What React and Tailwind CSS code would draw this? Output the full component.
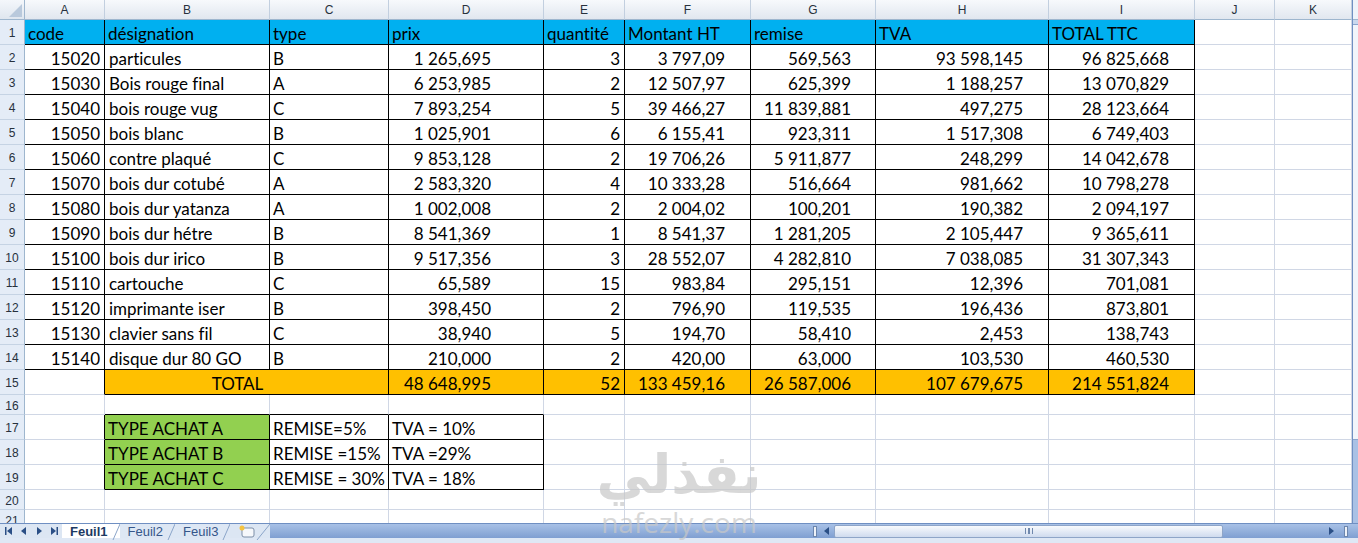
import React from 'react';

const COLS = [
  { key: 'A', w: 'w-[80px]', num: 'justify-end pr-[4px]' },
  { key: 'B', w: 'w-[165px]', num: 'justify-start pl-[4px]' },
  { key: 'C', w: 'w-[119px]', num: 'justify-start pl-[3px]' },
  { key: 'D', w: 'w-[155px]', num: 'justify-end pr-[52px]' },
  { key: 'E', w: 'w-[81px]', num: 'justify-end pr-[4px]' },
  { key: 'F', w: 'w-[126px]', num: 'justify-end pr-[25px]' },
  { key: 'G', w: 'w-[125px]', num: 'justify-end pr-[24px]' },
  { key: 'H', w: 'w-[173px]', num: 'justify-end pr-[25px]' },
  { key: 'I', w: 'w-[146px]', num: 'justify-end pr-[25px]' },
  { key: 'J', w: 'w-[80px]', num: '' },
  { key: 'K', w: 'w-[77px]', num: '' },
];

const HEAD = ['code', 'désignation', 'type', 'prix', 'quantité', 'Montant HT', 'remise', 'TVA', 'TOTAL TTC'];

const DATA = [
  ['15020', 'particules', 'B', '1 265,695', '3', '3 797,09', '569,563', '93 598,145', '96 825,668'],
  ['15030', 'Bois rouge final', 'A', '6 253,985', '2', '12 507,97', '625,399', '1 188,257', '13 070,829'],
  ['15040', 'bois rouge vug', 'C', '7 893,254', '5', '39 466,27', '11 839,881', '497,275', '28 123,664'],
  ['15050', 'bois blanc', 'B', '1 025,901', '6', '6 155,41', '923,311', '1 517,308', '6 749,403'],
  ['15060', 'contre plaqué', 'C', '9 853,128', '2', '19 706,26', '5 911,877', '248,299', '14 042,678'],
  ['15070', 'bois dur cotubé', 'A', '2 583,320', '4', '10 333,28', '516,664', '981,662', '10 798,278'],
  ['15080', 'bois dur yatanza', 'A', '1 002,008', '2', '2 004,02', '100,201', '190,382', '2 094,197'],
  ['15090', 'bois dur hétre', 'B', '8 541,369', '1', '8 541,37', '1 281,205', '2 105,447', '9 365,611'],
  ['15100', 'bois dur irico', 'B', '9 517,356', '3', '28 552,07', '4 282,810', '7 038,085', '31 307,343'],
  ['15110', 'cartouche', 'C', '65,589', '15', '983,84', '295,151', '12,396', '701,081'],
  ['15120', 'imprimante iser', 'B', '398,450', '2', '796,90', '119,535', '196,436', '873,801'],
  ['15130', 'clavier sans fil', 'C', '38,940', '5', '194,70', '58,410', '2,453', '138,743'],
  ['15140', 'disque dur 80 GO', 'B', '210,000', '2', '420,00', '63,000', '103,530', '460,530'],
];

const TOTAL = ['48 648,995', '52', '133 459,16', '26 587,006', '107 679,675', '214 551,824'];

const ACHAT = [
  ['TYPE ACHAT A', 'REMISE=5%', 'TVA = 10%'],
  ['TYPE ACHAT B', 'REMISE =15%', 'TVA =29%'],
  ['TYPE ACHAT C', 'REMISE = 30%', 'TVA = 18%'],
];

// cells that carry the black table borders (row 1..21, col 0..10 = A..K)
function inTable(r, c) {
  if (r >= 1 && r <= 14) return c <= 8;
  if (r === 15) return c >= 1 && c <= 8;
  if (r >= 17 && r <= 19) return c >= 1 && c <= 3;
  return false;
}

function rowHeight(r) {
  if (r === 16 || r === 20 || r === 21) return 'h-[20px]';
  return 'h-[25px]';
}

function cellContent(r, c) {
  if (r === 1 && c <= 8) return { text: HEAD[c], bg: 'bg-[#00b0f0]', align: 'justify-start pl-[3px]' };
  if (r >= 2 && r <= 14 && c <= 8) return { text: DATA[r - 2][c], align: COLS[c].num };
  if (r === 15 && c >= 3 && c <= 8) return { text: TOTAL[c - 3], bg: 'bg-[#ffc000]', align: COLS[c].num };
  if (r >= 17 && r <= 19 && c >= 1 && c <= 3) {
    return {
      text: ACHAT[r - 17][c - 1],
      bg: c === 1 ? 'bg-[#92d050]' : '',
      align: 'justify-start pl-[3px]',
    };
  }
  return { text: '' };
}

function Cell({ r, c, w, content }) {
  const rightBlack = inTable(r, c) || inTable(r, c + 1);
  const bottomBlack = inTable(r, c) || inTable(r + 1, c);
  return (
    <div
      className={`${w} h-full shrink-0 flex items-center pt-[3px] border-r border-b whitespace-nowrap overflow-hidden ${
        rightBlack ? 'border-r-black' : 'border-r-[#d0d7e5]'
      } ${bottomBlack ? 'border-b-black' : 'border-b-[#d0d7e5]'} ${content.bg || 'bg-white'} ${content.align || ''}`}
    >
      {content.text}
    </div>
  );
}

function SheetRow({ r }) {
  const cells = [];
  for (let c = 0; c < COLS.length; c++) {
    if (r === 15 && c === 1) {
      // B15:C15 merged
      cells.push(
        <div
          key={c}
          className="w-[284px] h-full shrink-0 flex items-center justify-center pt-[3px] pr-[18px] border-r border-b border-black bg-[#ffc000]"
        >
          TOTAL
        </div>
      );
      c++;
      continue;
    }
    cells.push(<Cell key={c} r={r} c={c} w={COLS[c].w} content={cellContent(r, c)} />);
  }
  return (
    <div className={`flex ${rowHeight(r)}`}>
      <div className="w-[25px] h-full shrink-0 flex items-center justify-center pt-[2px] bg-[#e4ecf7] border-r border-b border-r-[#9eb6ce] border-b-[#c5d3e4] text-[12px] text-[#27313d] font-['Liberation_Sans',sans-serif]">
        {r}
      </div>
      {cells}
    </div>
  );
}

function HeaderRow() {
  return (
    <div className="flex h-[20px]">
      <div className="w-[25px] h-full shrink-0 relative bg-[linear-gradient(#f4f7fb,#dfe6ef)] border-r border-b border-[#9eb6ce]">
        <svg className="absolute right-[2px] bottom-[2px]" width="13" height="13" viewBox="0 0 13 13">
          <polygon points="13,0 13,13 0,13" fill="#b9c9dc" />
        </svg>
      </div>
      {COLS.map((col) => (
        <div
          key={col.key}
          className={`${col.w} h-full shrink-0 flex items-center justify-center text-[12px] text-[#27313d] bg-[linear-gradient(#f7f9fc,#e1e7ef)] border-r border-b border-r-[#c2cfdf] border-b-[#9eb6ce] font-['Liberation_Sans',sans-serif]`}
        >
          {col.key}
        </div>
      ))}
    </div>
  );
}

function VScroll() {
  return (
    <div className="w-[6px] h-full shrink-0 flex flex-col bg-[#c9d8ee] border-l border-[#6f8fc2]">
      <div className="h-[20px] bg-[#eef3fa] border-b border-[#9eb6ce]" />
      <div className="h-[416px] mt-[4px] bg-[#f1f5fb] border-y border-[#8aa5cd]" />
      <div className="flex-1 bg-[#a9c1e5]" />
    </div>
  );
}

function NavArrows() {
  return (
    <div className="w-[62px] h-full flex items-center gap-[7px] pl-[5px] text-[#2b4f86]">
      <svg width="8" height="8" viewBox="0 0 8 8">
        <rect x="0" y="0" width="1.5" height="8" fill="currentColor" />
        <polygon points="7,0 7,8 2,4" fill="currentColor" />
      </svg>
      <svg width="8" height="8" viewBox="0 0 8 8">
        <polygon points="6,0 6,8 1,4" fill="currentColor" />
      </svg>
      <svg width="8" height="8" viewBox="0 0 8 8">
        <polygon points="2,0 2,8 7,4" fill="currentColor" />
      </svg>
      <svg width="8" height="8" viewBox="0 0 8 8">
        <polygon points="1,0 1,8 6,4" fill="currentColor" />
        <rect x="6.5" y="0" width="1.5" height="8" fill="currentColor" />
      </svg>
    </div>
  );
}

function Tab({ label, active }) {
  return (
    <div
      className={`relative h-full flex items-center pl-[8px] pr-[12px] text-[13px] font-['Liberation_Sans',sans-serif] ${
        active ? 'bg-white font-bold text-[#1d3a63]' : 'bg-[#dde7f4] text-[#35568a]'
      }`}
    >
      {label}
      <svg className="absolute right-0 top-0" width="8" height="16" viewBox="0 0 8 16">
        <line x1="1" y1="16" x2="8" y2="0" stroke="#8ba5c9" strokeWidth="1" />
      </svg>
    </div>
  );
}

function TabBar() {
  return (
    <div className="h-[15px] flex items-stretch bg-[#96b3df] bg-[linear-gradient(#a8c1e6,#7f9fd1)] border-t border-[#6f8fc2]">
      <div className="flex items-stretch bg-[#dce6f3]">
        <NavArrows />
        <Tab label="Feuil1" active />
        <Tab label="Feuil2" />
        <Tab label="Feuil3" />
        <div className="relative w-[40px] h-full flex items-center pl-[8px]">
          <svg width="18" height="13" viewBox="0 0 18 13">
            <rect x="4" y="3" width="12" height="9" rx="2" fill="#f6f8fb" stroke="#7d8fa8" />
            <circle cx="4" cy="3" r="2.5" fill="#f4c341" />
          </svg>
          <svg className="absolute right-0 top-0" width="14" height="16" viewBox="0 0 14 16">
            <line x1="1" y1="16" x2="14" y2="0" stroke="#8ba5c9" strokeWidth="1" />
          </svg>
        </div>
      </div>
      <div className="flex-1" />
      <div className="w-[545px] h-full shrink-0 flex items-center">
        <div className="w-[4px] h-[11px] bg-[#eef2f8] border border-[#6c86ad]" />
        <svg className="ml-[7px]" width="6" height="8" viewBox="0 0 6 8">
          <polygon points="5,0 5,8 0,4" fill="#2b4f86" />
        </svg>
        <div className="ml-[4px] w-[389px] h-[13px] shrink-0 rounded-[2px] bg-[linear-gradient(#f8fafd,#cfdbee)] border border-[#8ea5c8] flex items-center justify-center">
          <div className="w-[8px] h-[6px] border-x border-[#7088ad] flex justify-center">
            <div className="w-[2px] h-full border-x border-[#7088ad]" />
          </div>
        </div>
        <div className="flex-1" />
        <svg width="6" height="8" viewBox="0 0 6 8">
          <polygon points="1,0 1,8 6,4" fill="#2b4f86" />
        </svg>
        <div className="ml-[10px] mr-[10px] w-[4px] h-[11px] bg-[#eef2f8] border border-[#6c86ad]" />
      </div>
    </div>
  );
}

export default function App() {
  const rows = [];
  for (let r = 1; r <= 21; r++) rows.push(<SheetRow key={r} r={r} />);

  return (
    <div className="relative w-[1358px] h-[543px] overflow-hidden bg-white font-['Lato',sans-serif] text-[17px] text-black leading-none [font-variant-ligatures:none]">
      <div className="flex h-[523px]">
        <div className="w-[1352px] h-full overflow-hidden">
          <HeaderRow />
          {rows}
        </div>
        <VScroll />
      </div>
      <TabBar />
      <div className="h-[5px] bg-[#dfe8f5]" />

      {/* watermark */}
      <div className="absolute left-[594px] top-[444px] w-[170px] flex flex-col items-center pointer-events-none text-[#c8c8c8] opacity-70">
        <div className="text-[54px] font-bold leading-[62px] font-['DejaVu_Sans',sans-serif]" dir="rtl">
          نفذلي
        </div>
        <div className="text-[28px] leading-[30px] font-['Open_Sans',sans-serif] mt-[1px]">nafezly.com</div>
      </div>
    </div>
  );
}
